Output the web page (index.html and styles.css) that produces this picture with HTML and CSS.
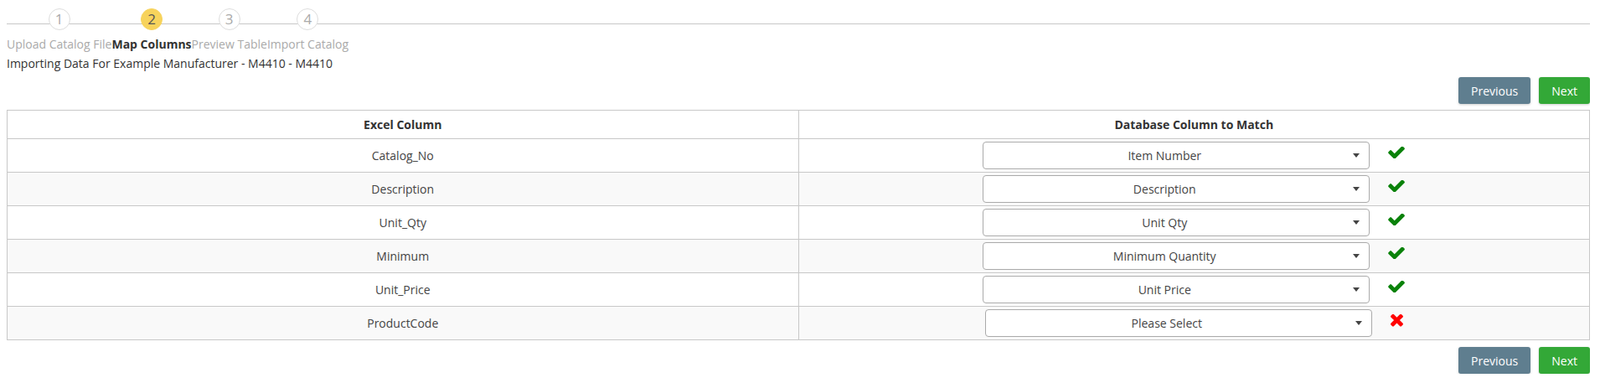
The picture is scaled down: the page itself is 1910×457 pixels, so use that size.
FILE: index.html
```html
<!DOCTYPE html>
<html lang="en">
<head>
  <meta charset="UTF-8">
  <title>Map Columns</title>
  <link rel="stylesheet" href="styles.css">
</head>
<body>
  <div class="stepper">
    <div class="step">
      <span class="step-num">1</span>
      <span class="step-label">Upload Catalog File</span>
    </div>
    <div class="step active">
      <span class="step-num">2</span>
      <span class="step-label">Map Columns</span>
    </div>
    <div class="step">
      <span class="step-num">3</span>
      <span class="step-label">Preview Table</span>
    </div>
    <div class="step">
      <span class="step-num">4</span>
      <span class="step-label">Import Catalog</span>
    </div>
  </div>

  <p class="subtitle">Importing Data For Example Manufacturer - M4410 - M4410</p>

  <div class="actions">
    <button class="btn btn-prev">Previous</button>
    <button class="btn btn-next">Next</button>
  </div>

  <table class="map-table">
    <thead>
      <tr>
        <th>Excel Column</th>
        <th>Database Column to Match</th>
      </tr>
    </thead>
    <tbody>
      <tr>
        <td>Catalog_No</td>
        <td>
          <div class="match">
            <div class="select-wrap"><select><option>Item Number</option></select></div>
            <svg class="status ok" viewBox="110 420 1570 1010"><path d="M1671 566q0 40-28 68l-724 724-136 136q-28 28-68 28t-68-28l-136-136-362-362q-28-28-28-68t28-68l136-136q28-28 68-28t68 28l294 295 656-657q28-28 68-28t68 28l136 136q28 28 28 68z"/></svg>
          </div>
        </td>
      </tr>
      <tr>
        <td>Description</td>
        <td>
          <div class="match">
            <div class="select-wrap"><select><option>Description</option></select></div>
            <svg class="status ok" viewBox="110 420 1570 1010"><path d="M1671 566q0 40-28 68l-724 724-136 136q-28 28-68 28t-68-28l-136-136-362-362q-28-28-28-68t28-68l136-136q28-28 68-28t68 28l294 295 656-657q28-28 68-28t68 28l136 136q28 28 28 68z"/></svg>
          </div>
        </td>
      </tr>
      <tr>
        <td>Unit_Qty</td>
        <td>
          <div class="match">
            <div class="select-wrap"><select><option>Unit Qty</option></select></div>
            <svg class="status ok" viewBox="110 420 1570 1010"><path d="M1671 566q0 40-28 68l-724 724-136 136q-28 28-68 28t-68-28l-136-136-362-362q-28-28-28-68t28-68l136-136q28-28 68-28t68 28l294 295 656-657q28-28 68-28t68 28l136 136q28 28 28 68z"/></svg>
          </div>
        </td>
      </tr>
      <tr>
        <td>Minimum</td>
        <td>
          <div class="match">
            <div class="select-wrap"><select><option>Minimum Quantity</option></select></div>
            <svg class="status ok" viewBox="110 420 1570 1010"><path d="M1671 566q0 40-28 68l-724 724-136 136q-28 28-68 28t-68-28l-136-136-362-362q-28-28-28-68t28-68l136-136q28-28 68-28t68 28l294 295 656-657q28-28 68-28t68 28l136 136q28 28 28 68z"/></svg>
          </div>
        </td>
      </tr>
      <tr>
        <td>Unit_Price</td>
        <td>
          <div class="match">
            <div class="select-wrap"><select><option>Unit Price</option></select></div>
            <svg class="status ok" viewBox="110 420 1570 1010"><path d="M1671 566q0 40-28 68l-724 724-136 136q-28 28-68 28t-68-28l-136-136-362-362q-28-28-28-68t28-68l136-136q28-28 68-28t68 28l294 295 656-657q28-28 68-28t68 28l136 136q28 28 28 68z"/></svg>
          </div>
        </td>
      </tr>
      <tr>
        <td>ProductCode</td>
        <td>
          <div class="match">
            <div class="select-wrap"><select><option>Please Select</option></select></div>
            <svg class="status bad" viewBox="110 420 1190 1140"><path d="M1298 1322q0 40-28 68l-136 136q-28 28-68 28t-68-28l-294-294-294 294q-28 28-68 28t-68-28l-136-136q-28-28-28-68t28-68l294-294-294-294q-28-28-28-68t28-68l136-136q28-28 68-28t68 28l294 294 294-294q28-28 68-28t68 28l136 136q28 28 28 68t-28 68l-294 294 294 294q28 28 28 68z"/></svg>
          </div>
        </td>
      </tr>
    </tbody>
  </table>

  <div class="actions bottom">
    <button class="btn btn-prev">Previous</button>
    <button class="btn btn-next">Next</button>
  </div>
</body>
</html>
```

FILE: styles.css
```css
body {
  font-family: "Open Sans", Arial, sans-serif;
  font-size: 14px;
  color: #333;
  margin: 8px 12px 8px 8px;
  background-color: #fff;
}

/* steps */
.stepper {
  display: flex;
  position: relative;
  padding-top: 2px;
}

.stepper::before {
  content: "";
  position: absolute;
  left: 0;
  right: 0;
  top: 20px;
  height: 1px;
  background-color: #c8c8c8;
}

.step {
  display: flex;
  flex-direction: column;
  align-items: center;
  position: relative;
}

.step-num {
  width: 26px;
  height: 26px;
  box-sizing: border-box;
  border: 1px solid #ddd;
  border-radius: 50%;
  background-color: #fff;
  color: #aaa;
  font-size: 17px;
  line-height: 24px;
  text-align: center;
}

.step-label {
  margin-top: 7px;
  line-height: 19px;
  color: #aaa;
}

.step.active .step-num {
  background-color: #f7d35c;
  border-color: #f7d35c;
  color: #555;
}

.step.active .step-label {
  color: #333;
  font-weight: bold;
}

.subtitle {
  margin: 4px 0 0;
  line-height: 19px;
}

/* buttons */
.actions {
  display: flex;
  justify-content: flex-end;
  gap: 10px;
  margin: 7px 0 7px;
}

.actions.bottom {
  margin: 8px 0 0;
}

.btn {
  height: 32px;
  padding: 0 15px;
  border: none;
  border-radius: 3px;
  font-family: inherit;
  font-size: 14px;
  color: #fff;
  cursor: pointer;
  box-shadow: 0 1px 3px rgba(0, 0, 0, 0.2);
}

.btn-prev {
  background-color: #5f7e8f;
}

.btn-next {
  background-color: #33a837;
}

/* table */
.map-table {
  width: 100%;
  border-collapse: collapse;
  border: 1px solid #c8c8c8;
  table-layout: fixed;
}

.map-table th,
.map-table td {
  border: 1px solid #c8c8c8;
  text-align: center;
}

.map-table th {
  padding: 8px;
  line-height: 17px;
  font-weight: bold;
  color: #333;
}

.map-table td {
  padding: 3px 8px;
  color: #444;
}

.map-table tbody tr:nth-child(even) {
  background-color: #f9f9f9;
}

.match {
  display: flex;
  justify-content: center;
  align-items: flex-start;
  gap: 22px;
}

.select-wrap {
  position: relative;
  width: 462px;
}

.select-wrap select {
  width: 100%;
  height: 33px;
  padding: 0 28px 0 0;
  border: 1px solid #aaa;
  border-radius: 4px;
  background-color: #fff;
  font-family: inherit;
  font-size: 14px;
  color: #444;
  text-align: center;
  text-align-last: center;
  appearance: none;
  -webkit-appearance: none;
}

.select-wrap::after {
  content: "";
  position: absolute;
  right: 12px;
  top: 14px;
  border-left: 4px solid transparent;
  border-right: 4px solid transparent;
  border-top: 5px solid #444;
  pointer-events: none;
}

.status {
  margin-top: 6px;
  height: 14px;
}

.status.ok {
  width: 20px;
  fill: #0a820a;
}

.status.bad {
  width: 15px;
  height: 15px;
  fill: #f00;
}
```
